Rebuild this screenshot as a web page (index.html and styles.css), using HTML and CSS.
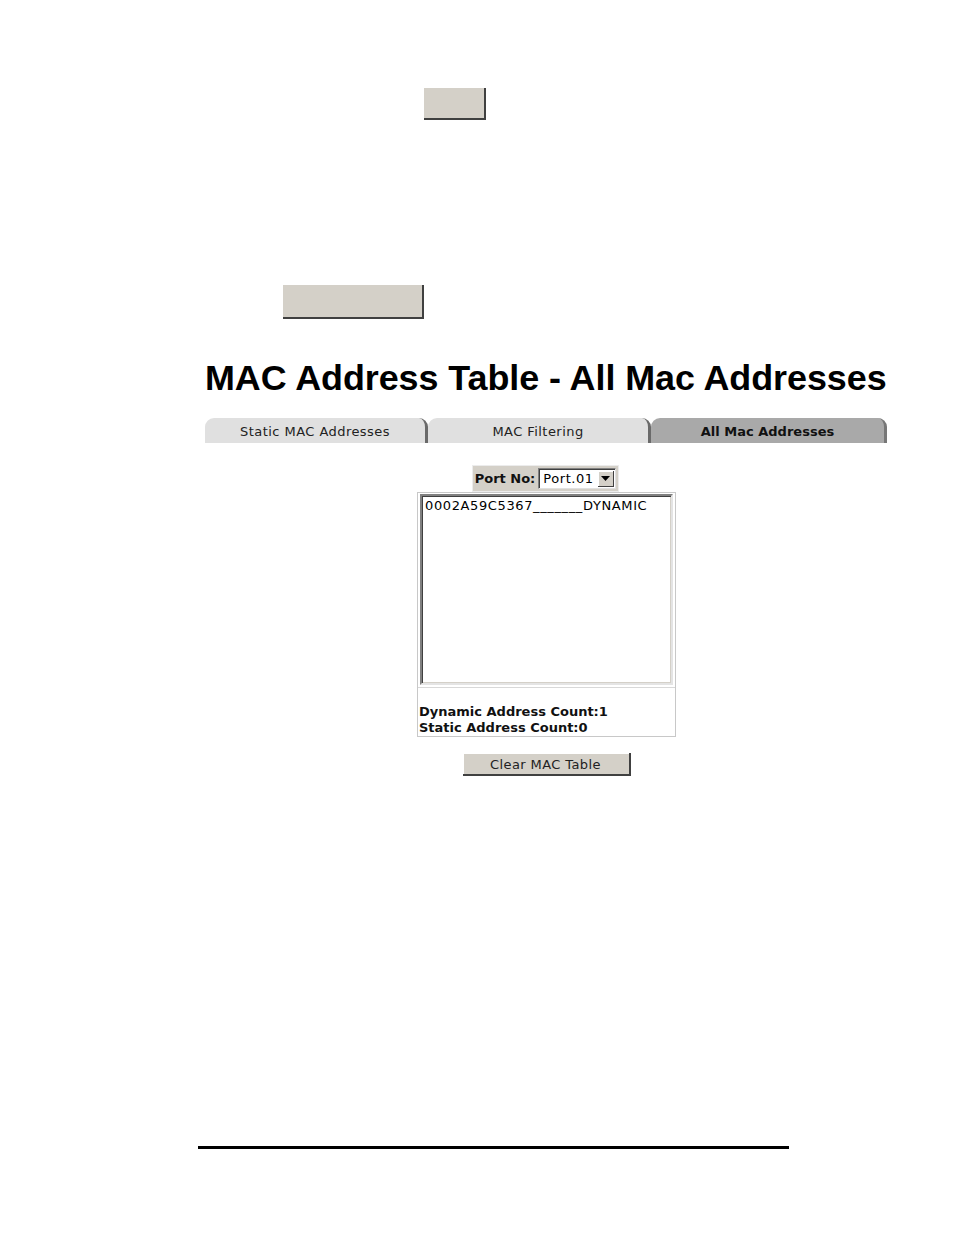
FILE: index.html
```html
<!DOCTYPE html>
<html>
<head>
<meta charset="utf-8">
<link rel="stylesheet" href="styles.css">
</head>
<body>
<div class="page">
  <div class="btn btn-small"></div>
  <div class="btn btn-wide"></div>
  <div class="content">
    <h1 class="title">MAC Address Table - All Mac Addresses</h1>
    <div class="tabs">
      <div class="tab">Static MAC Addresses</div>
      <div class="tab">MAC Filtering</div>
      <div class="tab active">All Mac Addresses</div>
    </div>
    <div class="panel">
      <div class="portbar">
        <span class="portlabel">Port No:</span>
        <div class="select"><span class="selval">Port.01</span><span class="selbtn"><svg width="9" height="5" viewBox="0 0 9 5"><path d="M0 0H9L4.5 5Z" fill="#000"/></svg></span></div>
      </div>
      <div class="macbox">
        <div class="listwrap">
          <div class="listbox">0002A59C5367_______DYNAMIC</div>
        </div>
        <div class="counts">
          <div>Dynamic Address Count:1</div>
          <div>Static Address Count:0</div>
        </div>
      </div>
      <div class="clearbtn">Clear MAC Table</div>
    </div>
  </div>
  <div class="footline"></div>
</div>
</body>
</html>
```
FILE: styles.css
```css
html, body { margin: 0; padding: 0; background: #fff; }
.page { width: 954px; height: 1235px; position: relative; overflow: hidden; display: flex; flex-direction: column; }
.btn { background: #d4d0c8; border-right: 2px solid #404040; border-bottom: 2px solid #404040; box-sizing: border-box; }
.btn-small { margin-left: 424px; margin-top: 88px; width: 62px; height: 32px; }
.btn-wide { margin-left: 283px; margin-top: 165px; width: 141px; height: 34px; }
.content { margin-left: 205px; width: 682px; display: flex; flex-direction: column; }
.title { font-family: "Liberation Sans", Arial, sans-serif; font-weight: bold; font-size: 35.9px; margin: 39px 0 0 0; line-height: 40px; height: 40px; white-space: nowrap; color: #000; letter-spacing: -0.05px; }
.tabs { display: flex; margin-top: 20px; height: 25px; }
.tab { flex: 0 0 223px; height: 25px; box-sizing: border-box; background: #e0e0e0; border-top-left-radius: 9px; border-top-right-radius: 9px; border-right: 3px solid #6a6a6a; font-family: "DejaVu Sans", Verdana, sans-serif; font-size: 13px; letter-spacing: 0.45px; color: #222; display: flex; align-items: center; justify-content: center; padding-top: 2px; }
.tab.active { flex-basis: 236px; background: #a9a9a9; font-weight: bold; color: #111; border-right-color: #777; letter-spacing: 0; }
.panel { display: flex; flex-direction: column; align-items: center; margin-top: 22px; }
.portbar { display: flex; align-items: center; background: #d4d0c8; border: 1px solid #ececec; height: 27px; box-sizing: border-box; padding: 0 2px 0 2px; margin-left: -1px; font-family: "DejaVu Sans", Verdana, sans-serif; font-size: 13px; }
.portlabel { font-weight: bold; margin-right: 3px; color: #111; }
.select { display: flex; align-items: center; background: #fff; border-top: 1px solid #808080; border-left: 1px solid #808080; border-right: 1px solid #e0e0e0; border-bottom: 1px solid #e0e0e0; height: 21px; box-sizing: border-box; width: 78px; box-shadow: inset 1px 1px 0 #404040; }
.selval { flex: 1; padding-left: 4px; color: #000; font-size: 13px; line-height: 18px; letter-spacing: 0.55px; }
.selbtn { width: 16px; height: 16px; background: #d4d0c8; border-right: 1px solid #404040; border-bottom: 1px solid #404040; box-shadow: inset 1px 1px 0 #fff; box-sizing: border-box; display: flex; align-items: center; justify-content: center; margin-right: 1px; }
.macbox { width: 259px; height: 245px; box-sizing: border-box; border: 1px solid #c8c8c8; display: flex; flex-direction: column; margin-left: 1px; }
.listwrap { padding: 1px 2px 0 2px; border-bottom: 1px solid #d8d8d8; height: 195px; box-sizing: border-box; }
.listbox { height: 191px; box-sizing: border-box; border-top: 2px solid #808080; border-left: 2px solid #808080; border-right: 2px solid #e4e4e4; border-bottom: 2px solid #e4e4e4; box-shadow: inset 1px 1px 0 #404040, inset -1px -1px 0 #d4d0c8; background: #fff; font-family: "DejaVu Sans", Verdana, sans-serif; font-size: 13px; letter-spacing: 0.62px; color: #000; padding: 2px 0 0 3px; white-space: nowrap; line-height: 15px; }
.counts { flex: 1; display: flex; flex-direction: column; justify-content: flex-end; padding: 0 0 0 1px; font-family: "DejaVu Sans", Verdana, sans-serif; font-weight: bold; font-size: 13px; line-height: 16px; color: #111; }
.clearbtn { margin-top: 16px; width: 168px; height: 23px; box-sizing: border-box; background: #d4d0c8; border-right: 2px solid #404040; border-bottom: 2px solid #404040; box-shadow: inset 1px 1px 0 #fff; font-family: "DejaVu Sans", Verdana, sans-serif; font-size: 13px; letter-spacing: 0.4px; color: #222; display: flex; align-items: center; justify-content: center; padding-top: 1px; margin-left: 1px; }
.footline { margin-top: auto; margin-bottom: 86px; margin-left: 198px; width: 591px; height: 3px; background: #000; }
```
